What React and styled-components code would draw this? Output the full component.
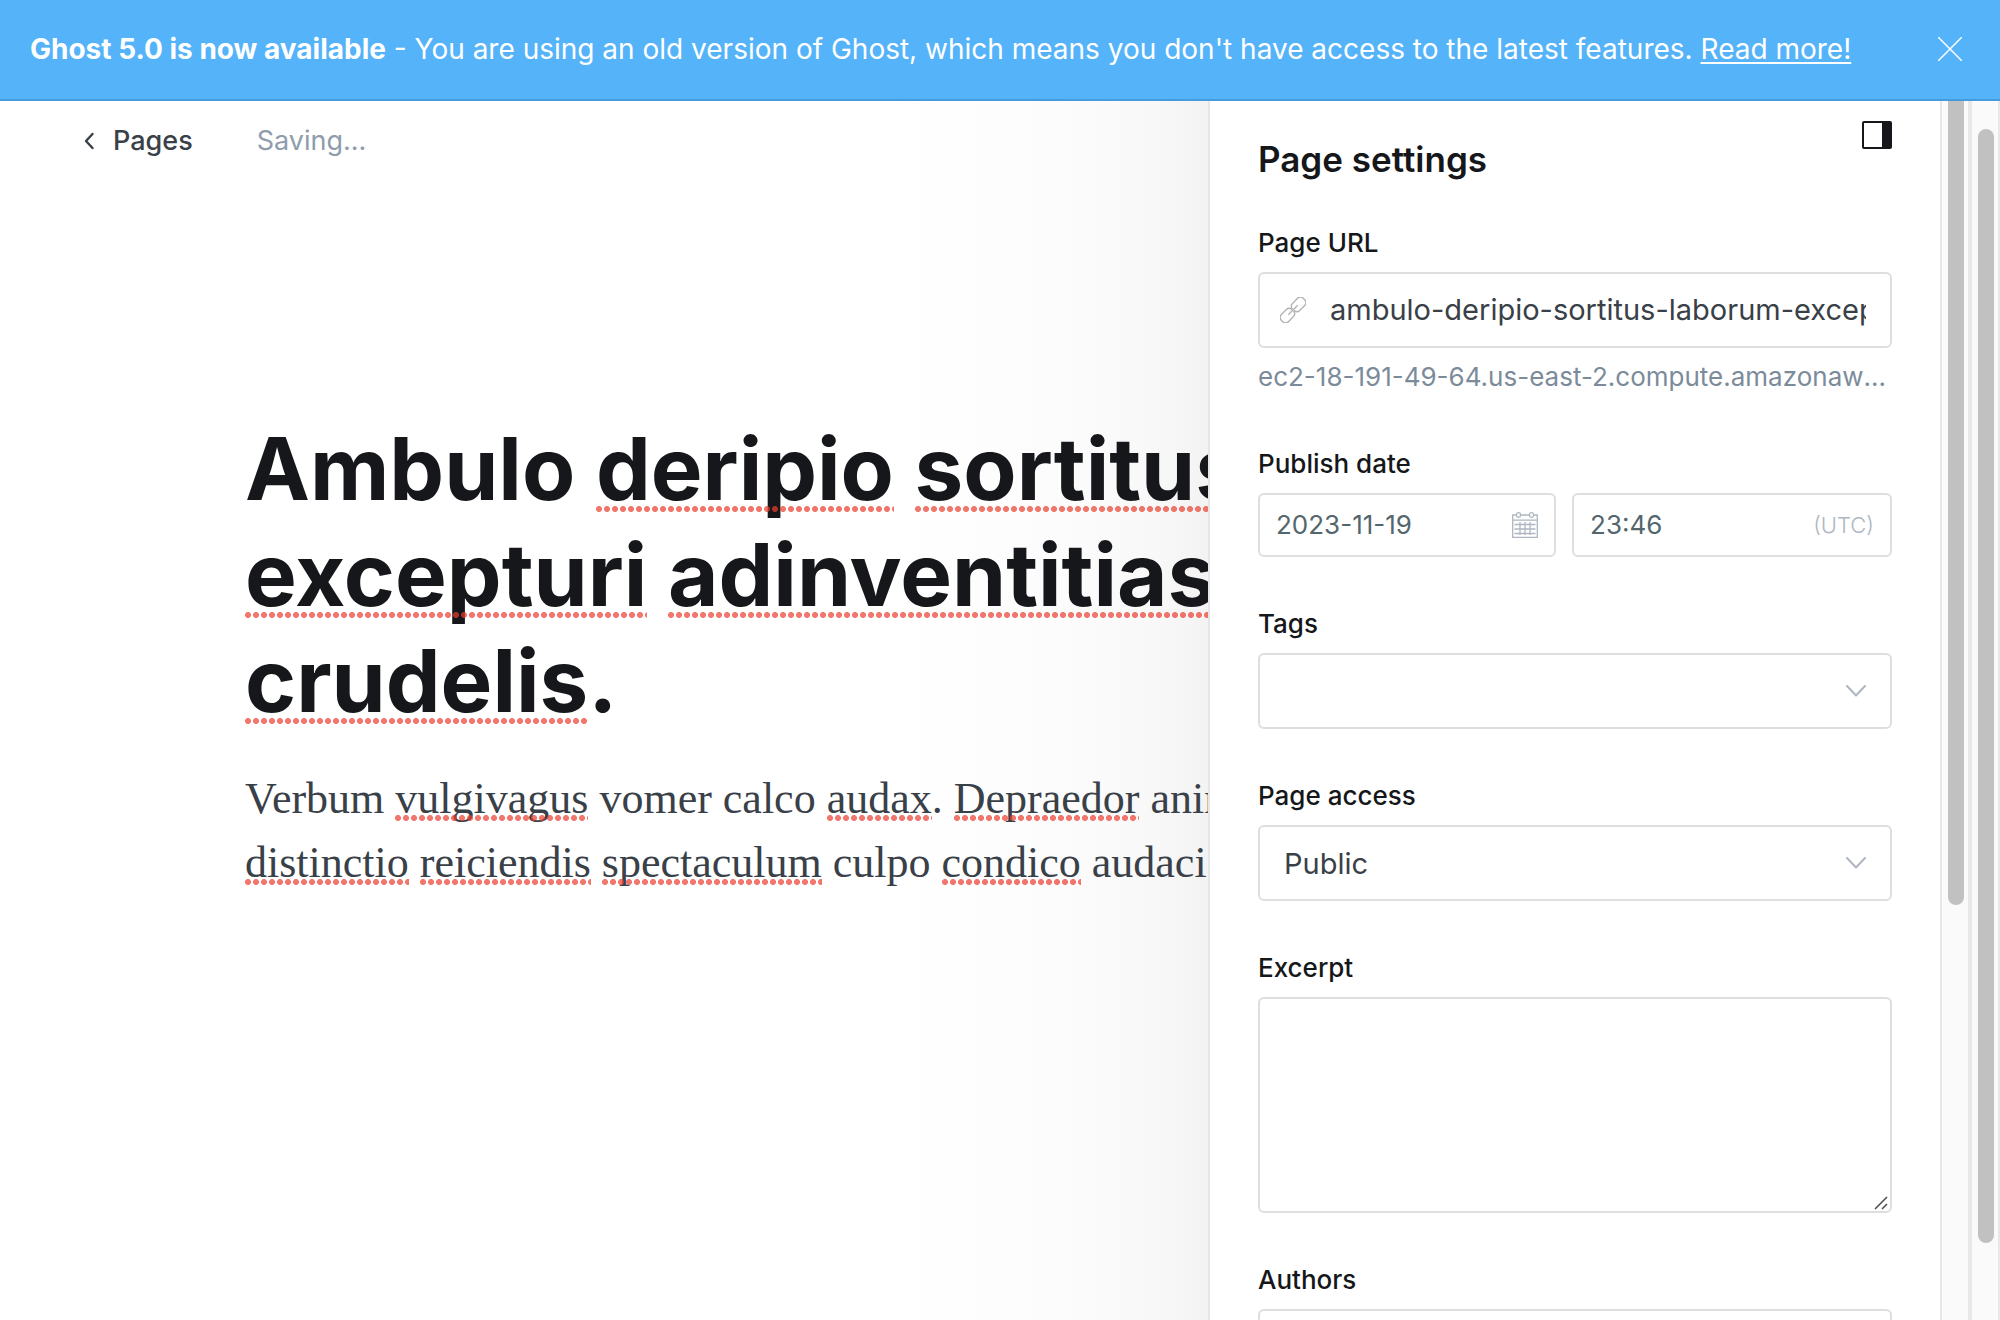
import React from "react";
import styled, { createGlobalStyle, css } from "styled-components";

const sans = '"Inter", "Liberation Sans", sans-serif';
const serif = '"Liberation Serif", serif';

const GlobalStyle = createGlobalStyle`
  *, *::before, *::after { box-sizing: border-box; }
  body { margin: 0; background: #fff; font-family: ${sans}; color: #15171a; }
  button, input, select, textarea { font-family: inherit; }
`;

const Page = styled.div`
  display: flex;
  flex-direction: column;
  height: 100vh;
  overflow: hidden;
`;

const Banner = styled.header`
  display: flex;
  align-items: center;
  justify-content: space-between;
  flex: none;
  padding: 31px 38px 32px 30px;
  border-bottom: 2px solid #469bdd;
  background: #54b3f9;
  color: #fff;
`;

const BannerText = styled.p`
  margin: 0;
  font-size: 28px;
  line-height: 36px;
  white-space: nowrap;
`;

const BannerLink = styled.a`
  color: inherit;
  text-decoration: underline;
  text-decoration-thickness: 2px;
  text-underline-offset: 3px;
`;

const IconButton = styled.button`
  display: flex;
  flex: none;
  padding: 0;
  border: 0;
  background: none;
  color: inherit;
  cursor: pointer;
`;

const Body = styled.div`
  display: flex;
  flex: 1;
  min-height: 0;
`;

const Editor = styled.main`
  flex: 1;
  min-width: 0;
  overflow: hidden;
  background: linear-gradient(to left, #f3f3f3 0, #f8f8f8 50px, #fbfbfb 120px, #fdfdfd 200px, #fff 320px);
`;

const Toolbar = styled.nav`
  display: flex;
  align-items: center;
  gap: 64px;
  height: 80px;
  padding-left: 84px;
`;

const BackLink = styled.a`
  display: flex;
  align-items: center;
  gap: 18px;
  color: #394047;
  font-size: 27px;
  font-weight: 500;
  line-height: 36px;
  text-decoration: none;
`;

const Status = styled.span`
  color: #8e9cac;
  font-size: 27px;
  line-height: 36px;
`;

const Document = styled.article`
  padding: 235px 0 0 245px;
  white-space: nowrap;
`;

const Title = styled.h1`
  margin: 0;
  font-size: 87px;
  font-weight: 700;
  line-height: 106px;
`;

const Paragraph = styled.p`
  margin: 33px 0 0;
  color: #394047;
  font-family: ${serif};
  font-size: 44px;
  line-height: 64px;
`;

const Misspelt = styled.span`
  position: relative;

  &::after {
    content: "";
    position: absolute;
    left: 0;
    right: 0;
    bottom: ${(p) => (p.$large ? "9px" : "2px")};
    height: 6px;
    background: radial-gradient(circle at 3px 3px, rgba(235, 60, 45, 0.7) 2.6px, transparent 3.4px) 0 0 / 8px 6px repeat-x;
  }
`;

const Panel = styled.aside`
  flex: none;
  width: 732px;
  overflow: hidden;
  padding: 0 48px;
  border-left: 2px solid #e6e6e6;
  background: #fff;
`;

const PanelHeader = styled.div`
  display: flex;
  justify-content: space-between;
  align-items: flex-start;
  height: 122px;
  padding-top: 20px;
`;

const PanelTitle = styled.h2`
  margin: 16px 0 0;
  font-size: 35px;
  font-weight: 600;
  line-height: 44px;
`;

const Form = styled.form`
  display: flex;
  flex-direction: column;
  gap: 47px;
`;

const Field = styled.div`
  display: flex;
  flex-direction: column;
`;

const Label = styled.label`
  margin-bottom: 9px;
  color: #15171a;
  font-size: 26px;
  font-weight: 500;
  line-height: 40px;
`;

const smallBox = css`
  height: 64px;
  padding: 0 16px;
`;

const Box = styled.div`
  display: flex;
  align-items: center;
  flex: ${(p) => p.$grow || "none"};
  gap: 24px;
  min-width: 0;
  height: 76px;
  padding: 0 24px 0 20px;
  border: 2px solid #dddedf;
  border-radius: 6px;
  background: #fff;
  color: #aeb7c1;
  ${(p) => p.$small && smallBox}
`;

const TextInput = styled.input`
  flex: 1;
  width: 0;
  min-width: 0;
  padding: 0;
  border: 0;
  outline: 0;
  background: none;
  color: ${(p) => (p.$small ? "#54666d" : "#394047")};
  font-size: ${(p) => (p.$small ? "26px" : "29px")};
  line-height: 40px;
`;

const Select = styled.select`
  flex: 1;
  min-width: 0;
  height: 100%;
  padding: 0 0 0 4px;
  border: 0;
  outline: 0;
  background: none;
  color: #394047;
  font-size: 29px;
  appearance: none;
`;

const Hint = styled.p`
  margin: 9px 0 0;
  overflow: hidden;
  color: #7c8b9a;
  font-size: 26px;
  line-height: 40px;
  text-overflow: ellipsis;
  white-space: nowrap;
`;

const DateRow = styled.div`
  display: flex;
  gap: 16px;
`;

const Zone = styled.span`
  color: #aeb7c1;
  font-size: 22px;
  font-weight: 300;
`;

const TextArea = styled.textarea`
  display: block;
  width: 100%;
  height: 216px;
  padding: 16px;
  border: 2px solid #dddedf;
  border-radius: 6px;
  outline: 0;
  color: #394047;
  font-size: 29px;
  resize: none;
`;

const AreaWrap = styled.div`
  position: relative;
`;

const Grip = styled.svg`
  position: absolute;
  right: 4px;
  bottom: 3px;
`;

const Track = styled.div`
  flex: none;
  width: 30px;
  padding: ${(p) => p.$inset} 4px 0 6px;
  border: solid #e8e8e8;
  border-width: 0 2px;
  background: #fafafa;
`;

const Thumb = styled.div`
  width: 16px;
  height: ${(p) => p.$size};
  border-radius: ${(p) => (p.$cut ? "0 0 8px 8px" : "8px")};
  background: #c1c1c1;
`;

const CloseIcon = () => (
  <svg width="24" height="24" viewBox="0 0 24 24" fill="none" stroke="currentColor" strokeWidth="1.5" strokeLinecap="round">
    <path d="M.5.5l23 23M23.5.5l-23 23" />
  </svg>
);

const BackIcon = () => (
  <svg width="11" height="18" viewBox="0 0 11 18" fill="none" stroke="currentColor" strokeWidth="2.4" strokeLinecap="round" strokeLinejoin="round">
    <path d="M8.5 2L2 9l6.500 7" />
  </svg>
);

const SidebarIcon = () => (
  <svg width="30" height="28" viewBox="0 0 30 28">
    <rect x="1" y="1" width="28" height="26" rx="1" fill="none" stroke="#15171a" strokeWidth="2" />
    <path d="M20 1h9v26h-9z" fill="#15171a" />
  </svg>
);

const LinkIcon = () => (
  <svg width="26" height="26" viewBox="0 0 26 26" fill="none" stroke="#b3b3b3" strokeWidth="1.4" strokeLinecap="round">
    <g transform="rotate(-45 13 13)">
      <path d="M7 13h12" />
      <path d="M13.500 11.500a3.500 3.500 0 0 1 3.500-3.500h7.500a4 4 0 0 1 4 4v2a4 4 0 0 1-4 4h-7.500a3.500 3.500 0 0 1-3.500-3.500" />
      <path d="M12.500 14.500a3.500 3.500 0 0 1-3.500 3.500h-7.500a4 4 0 0 1-4-4v-2a4 4 0 0 1 4-4h7.500a3.500 3.500 0 0 1 3.500 3.500" />
    </g>
  </svg>
);

const CalendarIcon = () => (
  <svg width="26" height="26" viewBox="0 0 26 26" fill="none" stroke="currentColor" strokeWidth="1.3">
    <path d="M4 3H.7v22.300h24.600V3H22M8 3h10M.7 8.200h24.600M2.500 12.500h21M2.500 17h21M2.500 21.500h21M8 10v13M13 10v13M18 10v13" />
    <rect x="4.500" y=".7" width="4" height="4.600" rx="1.800" />
    <rect x="17.500" y=".7" width="4" height="4.600" rx="1.800" />
  </svg>
);

const ChevronIcon = () => (
  <svg width="20" height="12" viewBox="0 0 20 12" fill="none" stroke="currentColor" strokeWidth="2" strokeLinecap="round" strokeLinejoin="round">
    <path d="M1 1l9 9.500 9-9.500" />
  </svg>
);

export default function App() {
  return (
    <>
      <GlobalStyle />
      <Page>
        <Banner>
          <BannerText>
            <b>Ghost 5.0 is now available</b> - You are using an old version of Ghost, which means you don't have access to the latest features.{" "}
            <BannerLink href="#more">Read more!</BannerLink>
          </BannerText>
          <IconButton type="button" aria-label="Close">
            <CloseIcon />
          </IconButton>
        </Banner>
        <Body>
          <Editor>
            <Toolbar>
              <BackLink href="#pages">
                <BackIcon />
                Pages
              </BackLink>
              <Status>Saving...</Status>
            </Toolbar>
            <Document>
              <Title>
                Ambulo <Misspelt $large>deripio</Misspelt> <Misspelt $large>sortitus</Misspelt>
                <br />
                <Misspelt $large>excepturi</Misspelt> <Misspelt $large>adinventitias</Misspelt>
                <br />
                <Misspelt $large>crudelis</Misspelt>.
              </Title>
              <Paragraph>
                Verbum <Misspelt>vulgivagus</Misspelt> vomer calco <Misspelt>audax</Misspelt>. <Misspelt>Depraedor</Misspelt> animi
                <br />
                <Misspelt>distinctio</Misspelt> <Misspelt>reiciendis</Misspelt> <Misspelt>spectaculum</Misspelt> culpo <Misspelt>condico</Misspelt> audacia
              </Paragraph>
            </Document>
          </Editor>
          <Panel>
            <PanelHeader>
              <PanelTitle>Page settings</PanelTitle>
              <IconButton type="button" aria-label="Toggle settings">
                <SidebarIcon />
              </IconButton>
            </PanelHeader>
            <Form>
              <Field>
                <Label htmlFor="url">Page URL</Label>
                <Box>
                  <LinkIcon />
                  <TextInput id="url" defaultValue="ambulo-deripio-sortitus-laborum-excepturi" />
                </Box>
                <Hint>ec2-18-191-49-64.us-east-2.compute.amazonaws.com</Hint>
              </Field>
              <Field>
                <Label htmlFor="date">Publish date</Label>
                <DateRow>
                  <Box $small $grow="12">
                    <TextInput $small id="date" defaultValue="2023-11-19" />
                    <CalendarIcon />
                  </Box>
                  <Box $small $grow="13">
                    <TextInput $small aria-label="Publish time" defaultValue="23:46" />
                    <Zone>(UTC)</Zone>
                  </Box>
                </DateRow>
              </Field>
              <Field>
                <Label htmlFor="tags">Tags</Label>
                <Box>
                  <TextInput id="tags" />
                  <ChevronIcon />
                </Box>
              </Field>
              <Field>
                <Label htmlFor="access">Page access</Label>
                <Box>
                  <Select id="access">
                    <option>Public</option>
                  </Select>
                  <ChevronIcon />
                </Box>
              </Field>
              <Field>
                <Label htmlFor="excerpt">Excerpt</Label>
                <AreaWrap>
                  <TextArea id="excerpt" />
                  <Grip width="14" height="14" viewBox="0 0 14 14" stroke="#4a4a4a" strokeWidth="1.500" aria-hidden="true">
                    <path d="M1 13L13 1M8 13l5-5" />
                  </Grip>
                </AreaWrap>
              </Field>
              <Field>
                <Label htmlFor="authors">Authors</Label>
                <Box>
                  <TextInput id="authors" />
                </Box>
              </Field>
            </Form>
          </Panel>
          <Track $inset="0">
            <Thumb $cut $size="804px" />
          </Track>
          <Track $inset="28px">
            <Thumb $size="1114px" />
          </Track>
        </Body>
      </Page>
    </>
  );
}
